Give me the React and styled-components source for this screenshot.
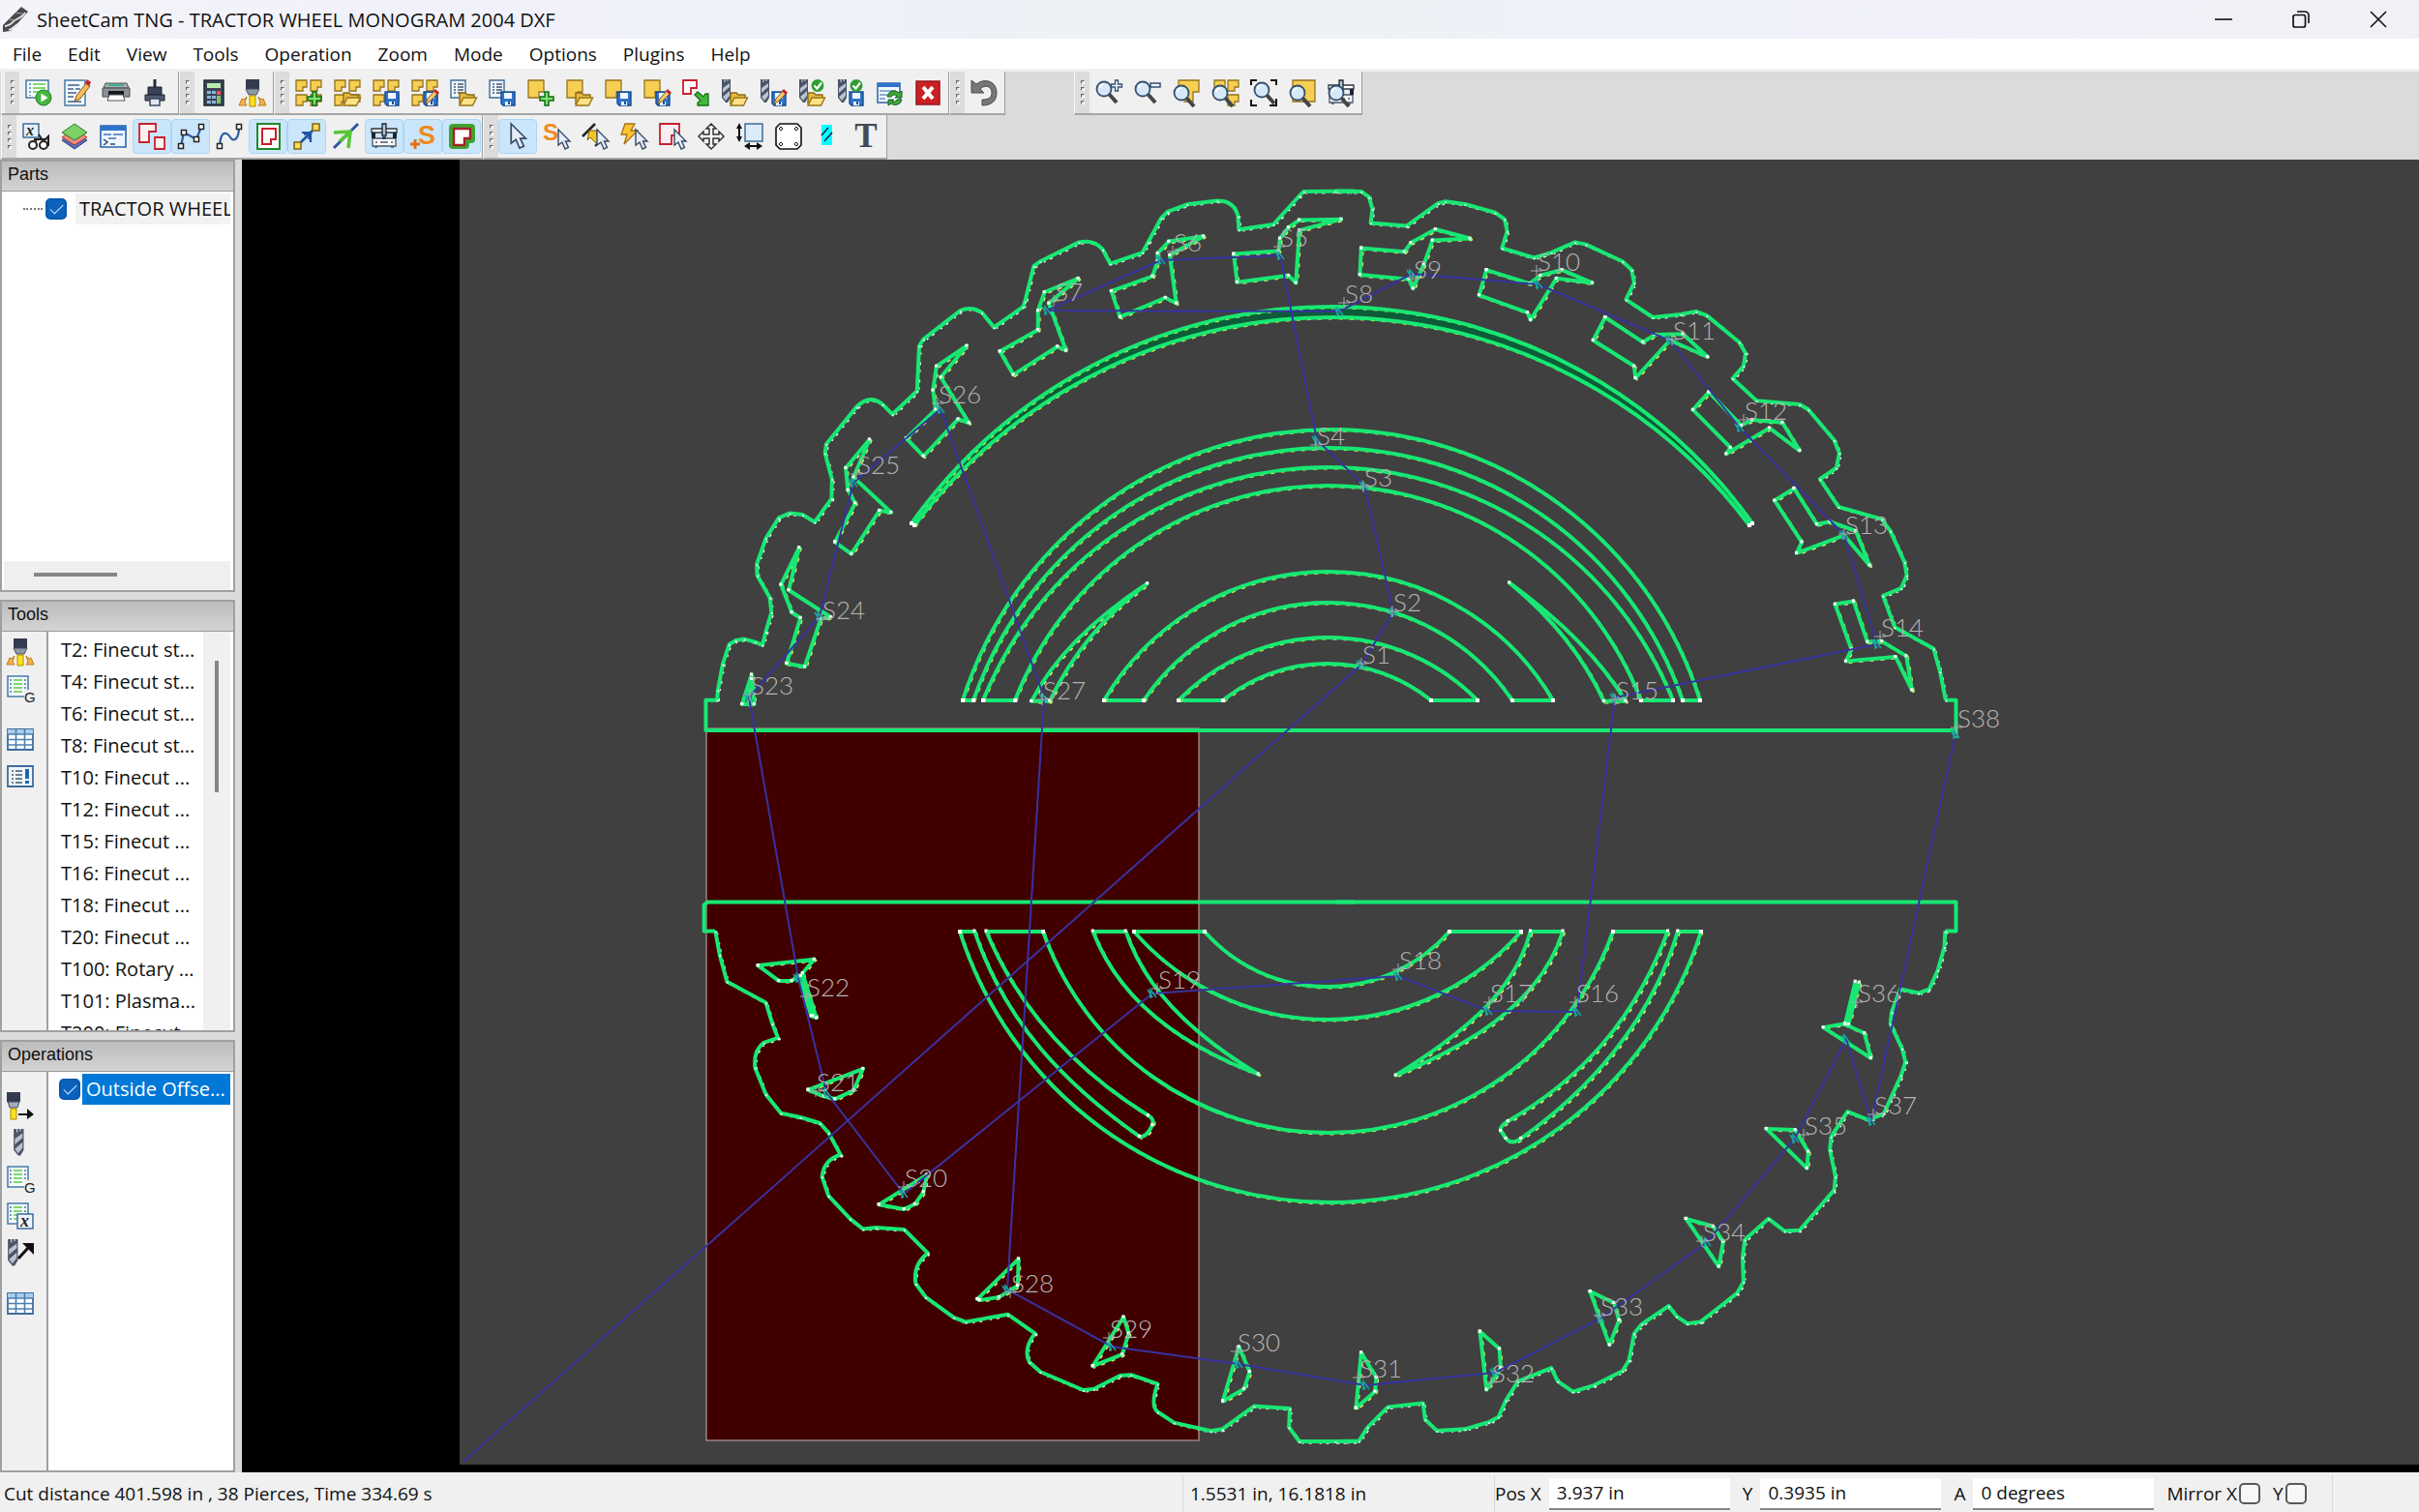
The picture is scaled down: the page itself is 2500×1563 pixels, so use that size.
import React from "react";
import styled, { createGlobalStyle } from "styled-components";

const GlobalStyle = createGlobalStyle`
  * {
    box-sizing: border-box;
  }

  body {
    margin: 0;
    background: #dbdbdb;
    color: #111;
    font-family: "Open Sans", "Noto Sans", sans-serif;
    font-size: 19px;
  }

  button, input {
    font: inherit;
    color: inherit;
  }
`;

// --- WINDOW ---
const Window = styled.div`
  display: flex;
  flex-direction: column;
  height: 100vh;
  overflow: hidden;
`;

const TitleBar = styled.header`
  display: flex;
  align-items: center;
  justify-content: space-between;
  height: 40px;
  padding: 0 24px 0 2px;
  background: linear-gradient(90deg, #f3f3f9, #f0f1fb 25%, #ecf2f5 50%, #f1f1fb 80%, #f1f0f5);
`;

const Title = styled.h1`
  display: flex;
  align-items: center;
  gap: 8px;
  margin: 0;
  font-size: 20px;
  font-weight: 400;
`;

const WindowButtons = styled.div`
  display: flex;
  gap: 44px;
`;

const WindowButton = styled.button`
  display: flex;
  align-items: center;
  justify-content: center;
  width: 36px;
  height: 32px;
  padding: 0;
  border: none;
  background: none;
`;

const MenuBar = styled.nav`
  display: flex;
  align-items: center;
  gap: 1px;
  height: 34px;
  padding-top: 1px;
  background: #fff;
  border-bottom: 3px solid #f0f0f0;
`;

const MenuItem = styled.button`
  padding: 0 13px;
  border: none;
  background: none;
  line-height: 30px;
`;

// --- TOOLBARS ---
const ToolbarArea = styled.div`
  padding-left: 1px;
  background: #dbdbdb;
`;

const ToolbarRow = styled.div`
  display: flex;
  height: ${(p) => p.$height}px;
`;

const ToolGroup = styled.div`
  display: flex;
  align-items: center;
  padding: 0 ${(p) => p.$pad || 1}px;
  margin-left: ${(p) => (p.$detached ? 71 : 0)}px;
  background: #f0f0f0;
  border-left: 1px solid #f7f7f7;
  border-right: 1px solid #9c9c9c;
  border-bottom: 2px solid #a6a6a6;
`;

const Grip = styled.span`
  display: flex;
  flex-direction: column;
  align-items: center;
  justify-content: center;
  gap: 3px;
  align-self: stretch;
  width: 15px;
  margin-left: -1px;
  background: #dcdcdc;

  i {
    width: 4px;
    height: 4px;
    border: 1px solid #fff;
    border-top-color: #666;
    border-left-color: #666;
  }
`;

const ToolButton = styled.button`
  display: flex;
  align-items: center;
  justify-content: center;
  width: 40px;
  height: 36px;
  padding: 0;
  border: 1px solid ${(p) => (p.$on ? "#a9d6f7" : "transparent")};
  border-radius: 4px;
  background: ${(p) => (p.$on ? "#cbe6fa" : "none")};
`;

const Svg = styled.svg`
  display: block;
  width: ${(p) => p.$w || 28}px;
  height: ${(p) => p.$h || 28}px;
  overflow: visible;
`;

// --- WORKSPACE ---
const Workspace = styled.main`
  display: flex;
  flex: 1;
  min-height: 0;
`;

const Sidebar = styled.aside`
  display: flex;
  flex-direction: column;
  gap: 8px;
  width: 250px;
  padding-right: 7px;
  background: #dbdbdb;
`;

const Panel = styled.section`
  display: flex;
  flex-direction: column;
  flex: 1;
  min-height: 0;
  border: 2px solid #a0a0a0;
`;

const PanelTitle = styled.h2`
  height: 31px;
  margin: 0;
  padding: 0 6px;
  border-bottom: 1px solid #999;
  background: linear-gradient(#bcbcbc, #d4d4d4);
  font: 18px/27px "Liberation Sans", sans-serif;
`;

const PanelBody = styled.div`
  display: flex;
  flex: 1;
  min-height: 0;
  background: #fff;
  font-size: 20px;
`;

const Strip = styled.div`
  display: flex;
  flex-direction: column;
  gap: 10px;
  width: 48px;
  padding: ${(p) => p.$top}px 5px 0;
  background: #f0f0f0;
  border-right: 2px solid #a0a0a0;
`;

const StripButton = styled.button`
  display: flex;
  padding: 0;
  border: none;
  background: none;
  margin-top: ${(p) => (p.$break ? 15 : 0)}px;
`;

const Tree = styled.div`
  display: flex;
  flex-direction: column;
  justify-content: space-between;
  flex: 1;
  min-width: 0;
  padding-right: 3px;
`;

const CheckRow = styled.label`
  display: flex;
  align-items: center;
  height: 32px;
  margin-top: 2px;
  padding-left: ${(p) => (p.$tree ? 22 : 11)}px;
`;

const Dots = styled.span`
  width: 20px;
  margin-right: 3px;
  border-top: 2px dotted #777;
`;

const CheckBox = styled.input`
  appearance: none;
  display: grid;
  place-content: center;
  flex: none;
  width: 22px;
  height: 22px;
  margin: 0;
  border: 2px solid ${(p) => (p.defaultChecked ? "#0a58ad" : "#5a5a5a")};
  border-radius: 5px;
  background: ${(p) => (p.defaultChecked ? "#0b62bd" : "#f7f7f7")};

  &:checked::after {
    content: "";
    width: 12px;
    height: 6px;
    margin-bottom: 4px;
    border-left: 1px solid #d9ecff;
    border-bottom: 1px solid #d9ecff;
    transform: rotate(-45deg);
  }
`;

const RowText = styled.span`
  flex: 1;
  min-width: 0;
  margin-left: ${(p) => (p.$selected ? 2 : 9)}px;
  padding-left: 4px;
  overflow: hidden;
  white-space: nowrap;
  line-height: 32px;
  color: ${(p) => (p.$selected ? "#fff" : "#111")};
  background: ${(p) => (p.$selected ? "#0078d7" : "#f2f2f2")};
`;

const ScrollX = styled.div`
  height: 30px;
  margin-left: 2px;
  padding: 12px 0 0 31px;
  background: #efefef;

  &::before {
    content: "";
    display: block;
    width: 86px;
    height: 4px;
    background: #868686;
  }
`;

const ScrollY = styled.div`
  width: 28px;
  margin-right: 3px;
  padding: 30px 0 0 12px;
  background: #f0f0f0;

  &::before {
    content: "";
    display: block;
    width: 4px;
    height: 136px;
    background: #868686;
  }
`;

const ToolList = styled.ul`
  flex: 1;
  min-width: 0;
  margin: 0;
  padding: 2px 0 0 13px;
  list-style: none;
  overflow: hidden;
  white-space: nowrap;
  line-height: 33px;
`;

const Canvas = styled.div`
  flex: 1;
  min-width: 0;
  background: #000;

  svg {
    display: block;
    width: 100%;
    height: 100%;
  }

  text {
    font: 300 26px Lato, "Open Sans", sans-serif;
    fill: #b4b4b4;
  }
`;

// --- STATUS BAR ---
const StatusBar = styled.footer`
  display: grid;
  grid-template-columns: 1223fr 322fr 866fr 89fr;
  height: 41px;
  padding-top: 3px;
  background: #f0f0f0;
`;

const StatusCell = styled.div`
  display: flex;
  align-items: center;
  padding-left: ${(p) => p.$pad || 0}px;
  border-right: 1px solid #d8d8d8;
  white-space: nowrap;
`;

const Field = styled.label`
  display: flex;
  align-items: center;
  gap: ${(p) => p.$gap || 8}px;
  margin-right: 13px;

  input[type="text"] {
    width: 187px;
    height: 33px;
    padding: 0 8px;
    border: none;
    border-bottom: 2px solid #868686;
    background: #fff;
  }
`;

// --- ICON PIECES, all in a 28 x 28 box ---
const gold = { fill: "#f6cf52", stroke: "#94731f", strokeWidth: 1.3 };

const L = ({ x = 0, y = 0 }) => (
  <path transform={`translate(${x} ${y})`} d="M1 1h11v7H8v4H1z" {...gold} />
);
const Grid4 = () => (
  <>
    <L /><L x={15} /><L y={15} /><L x={15} y={15} />
  </>
);
const BigPart = () => <path d="M1 1h16v12h-5v6H1z" {...gold} />;
const Plus = () => (
  <path d="M18 13h4v5h5v4h-5v5h-4v-5h-5v-4h5z" fill="#7ee06a" stroke="#0d6b14" strokeWidth="1.5" />
);
const Folder = () => (
  <>
    <path d="M10 26V14h6l2 2h7v3" fill="#e6b93f" stroke="#8a6a14" strokeWidth="1.4" />
    <path d="M10 27l4-8h13.500l-4 8z" fill="#fbe285" stroke="#9a7417" strokeWidth="1.4" />
  </>
);
const Disk = () => (
  <>
    <path d="M13 13h14v14H15l-2-2z" fill="#2f73c9" stroke="#174a93" strokeWidth="1.4" />
    <path d="M16 14h8v6h-8zM17 23h6v4h-6z" fill="#eef6ff" />
    <path d="M20 23h2v3h-2z" fill="#174a93" />
  </>
);
const Pencil = () => (
  <>
    <path d="M15 25l2-5 7-8 3 3-8 8z" fill="#f5c76b" stroke="#8a5a1c" strokeWidth="1" />
    <path d="M23 12l2-2 4 4-2 2z" fill="#c4202a" />
  </>
);
const Doc = () => (
  <>
    <path d="M1 1h15v18H1z" fill="#eef6fd" stroke="#3d6c99" strokeWidth="1.400" />
    <path d="M4 5h2m2 0h6M4 8h2m2 0h6M4 11h2m2 0h6M4 14h2m2 0h6" stroke="#44566b" strokeWidth="1.300" />
  </>
);
const Drill = ({ x = 0 }) => (
  <g transform={`translate(${x} 0)`}>
    <path d="M1 0h9v19l-3 5H5l-4-5z" fill="#4a5464" />
    <path d="M2 9l7-5v4l-7 6zM2 18l7-6v5l-4 5z" fill="#b9c2cf" />
    <path d="M4 0v3M7 0v2" stroke="#d3d9e2" />
  </g>
);
const Tick = () => (
  <>
    <circle cx="20" cy="6.500" r="6.500" fill="#2f9e33" />
    <path d="M16.500 6.500l3 3 4.500-6" fill="none" stroke="#fff" strokeWidth="2.200" />
  </>
);
const Lens = ({ y = 0 }) => (
  <g transform={`translate(0 ${y})`}>
    <path d="M14 15l8 9" stroke="#444" strokeWidth="4" />
    <circle cx="9" cy="10" r="7.500" fill="#d6e9fa" stroke="#36506e" strokeWidth="1.800" />
    <path d="M5 9a4 4 0 0 1 4-4" fill="none" stroke="#fff" strokeWidth="1.600" />
  </g>
);
const Pointer = ({ x = 0, y = 0 }) => (
  <path
    transform={`translate(${x} ${y})`}
    d="M1 0v16l4-3 3 7 3.500-1.500-3-6.500H13z"
    fill="#e6eff9"
    stroke="#3b4c66"
    strokeWidth="1.400"
  />
);
const Torch = () => (
  <>
    <path d="M7 0h14v10H7z" fill="#343b4e" />
    <path d="M7 10h14l-3 6h-8z" fill="#8e99a8" stroke="#454d5c" />
    <path d="M11 17h6v11h-6z" fill="#ffe11a" stroke="#b08d00" />
    <path d="M8 18l-3 3-2-1-3 7h8l-2-3zM20 18l3 3 2-1 3 7h-8l2-3z" fill="#f1b34c" stroke="#c07a1c" />
  </>
);
const Listing = () => (
  <>
    <path d="M1 1h21v21H1z" fill="#f5fbff" stroke="#4379a8" strokeWidth="1.500" />
    <path d="M7 5h9M7 9h9M7 13h9M7 17h9" stroke="#7fd86f" strokeWidth="2.200" />
    <path d="M4 4v16M19 4v11" stroke="#4379a8" strokeWidth="1.500" strokeDasharray="2 2" />
  </>
);
const Machine = () => (
  <>
    <path d="M1 6h26v4H1z" fill="#fff" stroke="#2a3442" strokeWidth="1.300" />
    <path d="M2 16h24v8H2z" fill="#fff" stroke="#4a5564" strokeWidth="1.300" />
    <path d="M1 10h4v6H1zM23 10h4v6h-4z" fill="#1c2430" />
    <path d="M12 1h4v12h-1v3h-2v-3h-1z" fill="#b7c2d0" stroke="#1c2430" strokeWidth="1.300" />
    <path d="M5 20h2m3 0h8m3 0h2M4 25h3m14 0h3" stroke="#4a5564" strokeWidth="1.500" />
  </>
);
const Nodes = ({ pts }) =>
  pts.map(([x, y]) => (
    <rect key={`${x}-${y}`} x={x - 2.5} y={y - 2.5} width="5" height="5" fill="#fff" stroke="#222" strokeWidth="1.500" />
  ));

const ICONS = {
  run: (
    <>
      <path d="M1 1h23v18H1z" fill="#f5fbff" stroke="#4379a8" strokeWidth="1.500" />
      <path d="M8 5h13M8 9h13M8 13h9" stroke="#7fd86f" strokeWidth="2" />
      <path d="M5 4v13" stroke="#4379a8" strokeDasharray="2 2" strokeWidth="1.500" />
      <circle cx="19" cy="19" r="8" fill="#46b63f" stroke="#207b23" />
      <path d="M16.500 14.500l7 4.500-7 4.500z" fill="#fff" />
    </>
  ),
  edit: (
    <>
      <path d="M1 1h21v26H1z" fill="#f2f9ff" stroke="#4379a8" strokeWidth="1.500" />
      <path d="M4 6h12M4 10h6m2 0h5M4 14h9M4 18h6M4 23h14" stroke="#3f5f86" strokeWidth="1.600" />
      <path d="M11 23l2-6L23 4l4 3-10 13z" fill="#f5bd58" stroke="#8a5a1c" />
      <path d="M22 4l2-4 4 3-2 4z" fill="#c4202a" />
    </>
  ),
  printer: (
    <>
      <path d="M3 4h22l2 5H1z" fill="#a9adb3" stroke="#4d5157" />
      <path d="M6 5h16v2H6z" fill="#3fb08a" />
      <path d="M0 9h28v9H0z" fill="#8b9097" stroke="#4b4f55" />
      <path d="M6 12h16v8H6z" fill="#16181b" />
      <path d="M7 16h14l2 6H5z" fill="#fff" stroke="#555" />
    </>
  ),
  plotter: (
    <>
      <path d="M14 0v9" stroke="#272d3b" strokeWidth="3" />
      <path d="M7 8h14v8H7z" fill="#3a4257" stroke="#1d2230" />
      <path d="M4 16h20v6H4z" fill="#4f5a6d" stroke="#1d2230" />
      <path d="M9 20h10v7H9z" fill="#dfe8f1" stroke="#3d465a" strokeWidth="1.500" />
    </>
  ),
  calculator: (
    <>
      <path d="M4 1h20v26H4z" fill="#3b4456" stroke="#222936" strokeWidth="1.500" />
      <path d="M7 4h14v5H7z" fill="#b8ecb0" />
      <path d="M7 12h4v3H7zM12 12h4v3h-4zM7 17h4v3H7zM12 17h4v3h-4zM7 22h4v3H7zM12 22h4v3h-4z" fill="#8fb4d8" />
      <path d="M17 12h4v4h-4z" fill="#e55" />
      <path d="M17 17h4v8h-4z" fill="#7ec26f" />
    </>
  ),
  torch: <Torch />,
  gridAdd: <><Grid4 /><Plus /></>,
  gridOpen: <><Grid4 /><Folder /></>,
  gridSave: <><Grid4 /><Disk /></>,
  gridEdit: <><Grid4 /><Disk /><Pencil /></>,
  docOpen: <><Doc /><Folder /></>,
  docSave: <><Doc /><Disk /></>,
  partAdd: <><BigPart /><Plus /></>,
  partOpen: <><BigPart /><Folder /></>,
  partSave: <><BigPart /><Disk /></>,
  partEdit: <><BigPart /><Disk /><Pencil /></>,
  partMove: (
    <>
      <path d="M1 1h14v8H9v6H1z" fill="#fff" stroke="#c8202d" strokeWidth="1.800" />
      <path d="M13 16l3-3 6 5 2-3h3v12H16v-3l3-2z" fill="#41b83a" stroke="#14701a" strokeWidth="1.300" />
    </>
  ),
  drillOpen: <><Drill /><Folder /></>,
  drillEdit: <><Drill /><Disk /><Pencil /></>,
  drillTickOpen: <><Drill /><Folder /><Tick /></>,
  drillTickSave: <><Drill /><Disk /><Tick /></>,
  refresh: (
    <>
      <path d="M2 4h23v20H2z" fill="#f2f8ff" stroke="#2d62a8" strokeWidth="1.500" />
      <path d="M2 4h23v4H2z" fill="#2f73c9" />
      <path d="M4 12h17M4 16h8M4 20h6" stroke="#6b93c4" strokeWidth="1.600" />
      <path d="M12 18a7 7 0 0 1 12-4l3-2v7h-7l2-2a4 4 0 0 0-6 1zM27 21a7 7 0 0 1-11 4l-3 2v-6h6l-2 2a4 4 0 0 0 5-2z" fill="#3fa83a" stroke="#14601a" />
    </>
  ),
  cancel: (
    <>
      <path d="M2 2h24v24H2z" fill="#cc1f24" stroke="#96141a" strokeWidth="1.500" />
      <path d="M9 8l10 12M19 8L9 20" stroke="#fff" strokeWidth="4" />
    </>
  ),
  undo: (
    <path
      d="M1 1v13h13l-4-4c5-5 12-3 12 4 0 5-4 7-10 7v6c10 0 15-5 15-13C27 2 15-2 6 5z"
      fill="#777"
      stroke="#4f4f4f"
    />
  ),
  zoomIn: <><Lens /><path d="M20.500 1h3v4h4v3h-4v4h-3V8h-4V5h4z" fill="#e9f3fc" stroke="#36506e" strokeWidth="1.300" /></>,
  zoomOut: <><Lens /><path d="M17 4h10v4H17z" fill="#e9f3fc" stroke="#36506e" strokeWidth="1.500" /></>,
  zoomPart: <><path d="M6 1h21v12h-6v10h-9V10H6z" {...gold} /><Lens y={4} /></>,
  zoomNest: <><L x={2} /><L x={16} /><L x={16} y={15} /><Lens y={4} /></>,
  zoomFit: (
    <>
      <path d="M1 6V1h6M21 1h6v5M1 21v6h6M27 20v7h-7" fill="none" stroke="#111" strokeWidth="2" />
      <g transform="translate(3 1)"><Lens /></g>
    </>
  ),
  zoomSheet: <><path d="M4 1h23v22H4z" {...gold} /><Lens y={4} /></>,
  zoomMachine: <><Machine /><Lens y={4} /></>,

  variables: (
    <>
      <path d="M1 1h16v14H1z" fill="#e6f1fb" stroke="#3d6c99" strokeWidth="1.500" />
      <text x="4" y="13" fontSize="16" fontStyle="italic" fontWeight="700" fontFamily="Liberation Serif" fill="#222">x</text>
      <path d="M17 12l4 6M12 17h12l3-3v10M15 17l-3 5" fill="none" stroke="#222" strokeWidth="2" />
      <circle cx="11" cy="23" r="4" fill="#fff" stroke="#222" strokeWidth="2" />
      <circle cx="22" cy="23" r="4" fill="#fff" stroke="#222" strokeWidth="2" />
    </>
  ),
  layers: (
    <>
      <path d="M14 10l13 8-13 9L1 18z" fill="#4c6fc0" stroke="#2b4585" />
      <path d="M14 6l13 9-13 8L1 15z" fill="#e98a80" stroke="#a33" />
      <path d="M14 1l13 9-13 8L1 10z" fill="#7ed068" stroke="#2c7a22" />
    </>
  ),
  code: (
    <>
      <path d="M1 3h26v22H1z" fill="#eef6ff" stroke="#2766b5" strokeWidth="1.600" />
      <path d="M1 3h26v5H1z" fill="#2f73c9" />
      <path d="M4 12h8m2 0h10M9 16h8" stroke="#3a74bd" strokeWidth="1.600" />
      <path d="M4 17l4 3-4 3M11 22h5" fill="none" stroke="#33465e" strokeWidth="1.500" />
    </>
  ),
  shapes: (
    <>
      <path d="M1 1h17v8h-7v11H1z" fill="#fdeff0" stroke="#c8202d" strokeWidth="1.800" />
      <path d="M17 15h10v12H17z" fill="#fdeff0" stroke="#c8202d" strokeWidth="1.800" />
    </>
  ),
  segments: (
    <>
      <path d="M4 24L7 10l13 7L25 4" fill="none" stroke="#2b5aa0" strokeWidth="2.200" />
      <Nodes pts={[[4, 24], [7, 10], [20, 17], [25, 4]]} />
    </>
  ),
  curve: (
    <>
      <path d="M4 24C5 6 12 10 15 15s9 3 9-11" fill="none" stroke="#2b5aa0" strokeWidth="2.200" />
      <Nodes pts={[[4, 24], [24, 4]]} />
    </>
  ),
  offset: (
    <>
      <path d="M3 1h23v26H3z" fill="#fff" stroke="#1d8a2a" strokeWidth="2" />
      <path d="M8 6h14v11h-5v5H8z" fill="#fff" stroke="#c8202d" strokeWidth="2" />
    </>
  ),
  direction: (
    <>
      <path d="M4 24L20 8" stroke="#2053a3" strokeWidth="2.600" />
      <path d="M9 10h9v10M11 12l7-2-2 7" fill="none" stroke="#2053a3" strokeWidth="2.200" />
      <path d="M1 20h7v7H1zM20 1h7v7h-7z" fill="#ffd95a" stroke="#7b6514" strokeWidth="1.500" />
    </>
  ),
  travel: (
    <>
      <path d="M2 26L27 1" stroke="#2b5aa0" strokeWidth="3" />
      <path d="M2 10l17-1-2 17M8 19L18 10" fill="none" stroke="#58c534" strokeWidth="3.500" />
    </>
  ),
  machine: <Machine />,
  starts: (
    <>
      <text x="9" y="22" fontSize="27" fontWeight="700" fontFamily="Liberation Sans" fill="#f08a1d">S</text>
      <path d="M6 17v10M1 22h10" stroke="#e0701a" strokeWidth="3" />
    </>
  ),
  kerf: (
    <>
      <path d="M5 5h19v12h-6v6H5z" fill="#fff" stroke="#3da52f" strokeWidth="8" strokeLinejoin="round" />
      <path d="M6 6h17v10h-6v7H6z" fill="#fff" stroke="#a5222b" strokeWidth="2.400" />
    </>
  ),
  select: <g transform="translate(6 1) scale(1.250)"><Pointer /></g>,
  selectStart: (
    <>
      <text x="0" y="18" fontSize="24" fontWeight="700" fontFamily="Liberation Sans" fill="#f08a1d">S</text>
      <Pointer x={15} y={7} />
    </>
  ),
  selectLink: (
    <>
      <path d="M1 14L14 1" stroke="#222" strokeWidth="2.500" />
      <path d="M8 8h10l-3 3 6 6-5 5-7-7-3 3z" fill="#f5c522" stroke="#80610c" />
      <path d="M14 24l7-7" stroke="#222" strokeWidth="2" />
      <Pointer x={15} y={7} />
    </>
  ),
  selectRapid: (
    <>
      <path d="M5 1h10l-4 7h7L4 22l3-10H1z" fill="#fbc62f" stroke="#a5701a" strokeWidth="1.300" />
      <Pointer x={15} y={7} />
    </>
  ),
  selectPart: (
    <>
      <path d="M1 1h20v12h-8v9H1z" fill="#f8eef0" stroke="#c8202d" strokeWidth="1.800" />
      <Pointer x={15} y={7} />
    </>
  ),
  pan: (
    <path
      d="M14 1l5 5h-3v6h6V9l5 5-5 5v-3h-6v6h3l-5 5-5-5h3v-6H6v3l-5-5 5-5v3h6V6H9z"
      fill="#fff"
      stroke="#333"
      strokeWidth="1.500"
    />
  ),
  size: (
    <>
      <path d="M9 1h18v18H9z" fill="#dcebf9" stroke="#3d6c99" strokeWidth="1.500" />
      <path d="M3 4v12M12 24h11" stroke="#111" strokeWidth="2" />
      <path d="M0 6l3-6 3 6zM0 14l3 6 3-6zM14 20l-6 4 6 4zM21 20l6 4-6 4z" fill="#111" />
    </>
  ),
  plate: (
    <>
      <path d="M5 1h18l4 4v18l-4 4H5l-4-4V5z" fill="#fff" stroke="#111" strokeWidth="1.600" />
      <path d="M6 4l2 2-2 2-2-2zM22 4l2 2-2 2-2-2zM6 20l2 2-2 2-2-2zM22 20l2 2-2 2-2-2z" fill="none" stroke="#111" />
    </>
  ),
  strip: (
    <>
      <path d="M8 2h11v21H8z" fill="#0ff" />
      <path d="M8 13l7-8M11 19l8-9" stroke="#114" strokeWidth="1.300" />
    </>
  ),
  text: (
    <text x="14" y="25" textAnchor="middle" fontSize="35" fontFamily="Liberation Serif" fontWeight="700" fill="#454a52">T</text>
  ),

  gcode: (
    <>
      <Listing />
      <path d="M18 15h10v13H18z" fill="#f0f0f0" />
      <text x="18" y="28" fontSize="15" fontFamily="Liberation Sans" fill="#222">G</text>
    </>
  ),
  table: (
    <>
      <path d="M1 3h26v21H1z" fill="#fff" stroke="#3d6c99" strokeWidth="1.800" />
      <path d="M1 3h26v5H1z" fill="#a9cdee" />
      <path d="M1 8h26M1 13.500h26M1 19h26M9.500 3v21M18.500 3v21" stroke="#4b80b0" strokeWidth="1.600" />
    </>
  ),
  notes: (
    <>
      <path d="M1 3h26v21H1z" fill="#eef6fd" stroke="#3d6c99" strokeWidth="1.800" />
      <path d="M5 8h2m2 0h7M5 12h2m2 0h7M5 16h2m2 0h7M5 20h2m2 0h7" stroke="#44566b" strokeWidth="1.600" />
      <path d="M19 6h4v10h-4zM19 18h4v3h-4z" fill="#1f66b0" />
    </>
  ),
  jet: (
    <>
      <path d="M0 0h14v10H0z" fill="#343b4e" />
      <path d="M1 10h12l-2 6H3z" fill="#a3adba" stroke="#454d5c" />
      <path d="M4 17h6v11H4z" fill="#ffe11a" stroke="#b08d00" />
      <path d="M12 22h9v-5l7 6-7 5v-4h-9z" fill="#111" />
    </>
  ),
  drill: <g transform="translate(6 0) scale(1.150)"><Drill /></g>,
  gvar: (
    <>
      <Listing />
      <path d="M11 12h16v15H11z" fill="#eef6fd" stroke="#3d6c99" strokeWidth="1.500" />
      <text x="14" y="25" fontSize="18" fontStyle="italic" fontWeight="700" fontFamily="Liberation Serif" fill="#222">x</text>
    </>
  ),
  drillMove: (
    <>
      <g transform="scale(1.150)"><Drill /></g>
      <path d="M12 20L22 9" stroke="#111" strokeWidth="3" />
      <path d="M16 4h12v12z" fill="#111" />
    </>
  ),
};

const MENUS = ["File", "Edit", "View", "Tools", "Operation", "Zoom", "Mode", "Options", "Plugins", "Help"];

const TOP_GROUPS = [
  { pad: 4, items: ["run", "edit", "printer", "plotter"] },
  { items: ["calculator", "torch"] },
  {
    items: [
      "gridAdd", "gridOpen", "gridSave", "gridEdit", "docOpen", "docSave", "partAdd", "partOpen", "partSave",
      "partEdit", "partMove", "drillOpen", "drillEdit", "drillTickOpen", "drillTickSave", "refresh", "cancel",
    ],
  },
  { items: ["undo"] },
  { detached: true, items: ["zoomIn", "zoomOut", "zoomPart", "zoomNest", "zoomFit", "zoomSheet", "zoomMachine"] },
];

const BOTTOM_GROUPS = [
  {
    items: [
      "variables", "layers", "code", "shapes", "segments", "curve", "offset", "direction", "travel", "machine",
      "starts", "kerf",
    ],
  },
  { items: ["select", "selectStart", "selectLink", "selectRapid", "selectPart", "pan", "size", "plate", "strip", "text"] },
];

const ACTIVE = ["shapes", "segments", "offset", "direction", "machine", "starts", "kerf", "select"];

const TOOLS = [
  "T2: Finecut st...", "T4: Finecut st...", "T6: Finecut st...", "T8: Finecut st...", "T10: Finecut ...",
  "T12: Finecut ...", "T15: Finecut ...", "T16: Finecut ...", "T18: Finecut ...", "T20: Finecut ...",
  "T100: Rotary ...", "T101: Plasma...", "T200: Finecut ...",
];

// --- DRAWING DATA ---
// arch through (x1, y) and (x2, y) with its apex at height top
function arch(x1, x2, y, top) {
  const h = (x2 - x1) / 2;
  const s = Math.abs(y - top);
  const r = (h * h + s * s) / (2 * s);
  return `M${x1} ${y}A${r} ${r} 0 0 ${top < y ? 1 : 0} ${x2} ${y}`;
}

const ARCS = [
  arch(942, 1811, 541, 317),
  arch(945, 1808, 543, 328),
  arch(995, 1757, 724, 444),
  arch(1006, 1739, 724, 463),
  arch(1016, 1729, 724, 483),
  arch(1049, 1696, 724, 502),
  arch(1141, 1605, 724, 591),
  arch(1182, 1563, 724, 623),
  arch(1218, 1527, 724, 659),
  arch(1264, 1479, 724, 686),
  arch(992, 1758, 963, 1243),
  arch(1078, 1667, 963, 1171),
  arch(1172, 1572, 963, 1054),
  arch(1245, 1498, 963, 1020),
];

// flat ends that close the bands
const ENDS =
  "M995 724h11M1016 724h33M1141 724h41M1218 724h46M1739 724h18M1696 724h33M1563 724h42M1479 724h48M992 963h15M1019 963h59M1129 963h34M1172 963h73M1498 963h74M1582 963h33M1667 963h57M1734 963h24";

// each tile has its own drawing units
const TILES = [
  {
    at: "translate(700 170) scale(0.44643 0.38265)",
    bars: "M1568 1529H66V1447H92",
    outline:
      "M92 1447L94 1420 105 1350 120 1297 135 1286 155 1282 180 1290 197 1298 205 1262 218 1210 214 1170 185 1110 184 1080 205 1010 235 955 260 942 290 946 318 966 357 903 358 850 342 780 345 755 415 655Q445 620 475 648L498 675 555 612 560 490 570 472 655 395Q680 382 705 400L733 440 800 385 805 370 825 275 840 262 930 210Q965 202 985 230L1002 268 1077 238 1090 210 1120 145 1135 128 1180 108 1250 98Q1290 98 1298 140L1300 176 1380 162 1440 85 1450 73 1568 72",
    parts: [
      "M1288 242L1392 234 1395 200 1415 170 1440 150 1537 148 1440 178 1432 320 1415 300 1296 318Z",
      "M1005 342L1100 302 1112 262 1112 240 1138 208 1218 194 1140 245 1155 375 1130 360 1025 412Z",
      "M747 505L835 447 835 395 850 345 928 308 860 375 900 503 880 492 778 568Z",
      "M530 740L598 662 592 610 600 545 670 490 610 575 675 698 650 688 570 788Z",
      "M365 1020L412 915 395 880 390 820 445 743 408 845 495 940 468 935 403 1052Z",
      "M253 1348L285 1225 265 1210 240 1135 282 1035 258 1150 355 1223 332 1228 295 1357Z",
      "M150 1458L172 1378 178 1458ZM165 1450L172 1390",
      "M820 1450Q895 1280 1088 1132Q940 1260 862 1450Z",
    ],
  },
  {
    at: "translate(1380 170) scale(0.44643 0.38265)",
    bars: "M1413 1447H1437V1550M1437 1529H0",
    outline:
      "M0 72L60 73 78 88 86 120 82 158 165 166 238 105 255 100 300 107 370 130 392 148 398 180 386 226 460 252 500 238 555 210 580 216 665 262 686 285 692 320 673 365 735 413 800 405 835 397 860 408 935 480 950 510 945 545 920 578 975 638 1075 648 1095 662 1155 745 1167 780 1160 820 1122 850 1165 925 1265 958 1285 990 1318 1075 1323 1110 1310 1145 1268 1165 1295 1250 1385 1308 1400 1370 1413 1447",
    parts: [
      "M60 226L160 236 175 212 232 175 312 200 225 205 205 270 180 335 170 310 57 298Z",
      "M350 285L450 322 475 300 525 285 595 320 512 308 452 420 445 400 333 353Z",
      "M625 413L712 480 740 460 805 458 862 520 775 475 695 577 692 545 597 475Z",
      "M865 615L940 705 965 690 1035 697 1075 773 1005 712 905 782 915 765 828 663Z",
      "M1062 875L1115 972 1145 965 1205 990 1237 1083 1178 1002 1068 1050 1080 1020 1017 908Z",
      "M1200 1180L1232 1290 1265 1288 1322 1328 1335 1420 1297 1330 1182 1342 1195 1310 1157 1188Z",
      "M672 1450Q590 1290 403 1130Q550 1270 622 1450Z",
    ],
  },
  {
    at: "translate(700 900) scale(0.44643 0.39541)",
    bars: "M1568 82H70L62 90V158H88",
    outline:
      "M88 158L98 220 115 290 205 345 220 400 233 437 200 450Q176 470 180 515L205 585 240 634 285 645 330 660 350 685 378 743Q340 755 335 800L350 850 400 910 430 937 460 933 525 938 580 1000Q545 1030 552 1080L575 1115 640 1168 668 1180 765 1160 828 1210Q800 1250 815 1285L840 1310 940 1358 965 1355 1025 1320 1050 1318 1112 1342Q1094 1400 1112 1415L1150 1443 1235 1465 1262 1460 1335 1400 1418 1406 1416 1455 1440 1492 1568 1492",
    parts: [
      "M187 248L317 232 290 268 322 385 310 380 280 275 265 288 235 288ZM286 275L314 380",
      "M303 573L430 518 408 575 365 597 340 590Z",
      "M467 873L578 795 570 840 550 872 525 885Z",
      "M695 1120L790 1015 788 1085 745 1115 700 1123Z",
      "M962 1295L1033 1167 1045 1210 1030 1265Z",
      "M1263 1387L1300 1245 1325 1310 1312 1355Z",
      "M688 158C760 400 900 560 1070 695Q1085 700 1100 665Q1105 650 1090 640C920 520 790 360 715 158",
      "M962 158C1020 330 1150 450 1345 532C1180 420 1080 300 1038 158",
    ],
  },
  {
    at: "translate(1380 900) scale(0.44643 0.39541)",
    bars: "M1412 158H1437V82H0",
    outline:
      "M0 1492L55 1491 75 1455 122 1402 203 1392 208 1435 235 1464 300 1460 355 1442 378 1428 395 1385 423 1335 500 1300 515 1335 550 1362 600 1345 665 1308 680 1280 692 1210 710 1185 772 1138 790 1165 815 1184 845 1180 930 1105 945 1075 943 1010 948 965 1003 910 1040 942 1075 940 1155 835 1158 800 1145 730 1148 695 1186 630 1235 652 1270 635 1310 535 1320 500 1312 465 1285 400 1288 370 1308 310 1350 320 1375 310 1395 260 1410 200 1412 158",
    parts: [
      "M48 1405L60 1260 95 1325 92 1362Z",
      "M335 1205L380 1250 383 1300 350 1357Z",
      "M590 1100L645 1130 657 1175 635 1240Z",
      "M812 910L875 930 898 970 888 1035Z",
      "M998 675L1065 678 1095 735 1092 778Z",
      "M1204 290L1180 402 1225 425 1240 490 1130 410 1180 400M1213 292L1188 402",
      "M793 158C730 400 580 580 430 700Q408 718 395 700L383 680Q380 668 400 655C560 550 690 400 770 158",
      "M527 158C480 330 330 450 140 535C320 410 420 300 452 158",
    ],
  },
];

// pierce point x, y and label x, baseline y, in cutting order
const STARTS = [
  [1407, 687, 1409, 686], [1440, 633, 1441, 632], [1410, 502, 1411, 503], [1361, 455, 1362, 460],
  [1323, 264, 1324, 255], [1200, 269, 1214, 260], [1082, 321, 1091, 311], [1384, 322, 1391, 313],
  [1459, 283, 1462, 288], [1590, 294, 1590, 280], [1726, 352, 1730, 351], [1798, 442, 1804, 434],
  [1906, 553, 1908, 552], [1940, 666, 1945, 658], [1669, 721, 1671, 723], [1630, 1046, 1630, 1036],
  [1538, 1045, 1541, 1036], [1445, 1009, 1447, 1002], [1191, 1027, 1198, 1022], [934, 1234, 936, 1227],
  [854, 1129, 845, 1128], [825, 1011, 835, 1030], [774, 721, 777, 718], [847, 637, 851, 640],
  [882, 499, 887, 490], [972, 423, 971, 417], [1079, 721, 1079, 723], [1041, 1333, 1046, 1336],
  [1149, 1392, 1148, 1383], [1280, 1410, 1280, 1397], [1411, 1432, 1406, 1424], [1545, 1419, 1543, 1429],
  [1654, 1363, 1655, 1360], [1764, 1284, 1761, 1283], [1855, 1177, 1866, 1173], [1908, 1074, 1921, 1036],
  [1934, 1159, 1938, 1152], [2021, 759, 2024, 752],
];

// green cut line with bright flecks showing along one side of it
function Cut({ d, fleck, dash = "4 7", shift = 1, marker }) {
  return (
    <g fill="none" strokeLinejoin="round">
      {fleck && (
        <path
          d={d}
          transform={`translate(${shift} ${shift})`}
          stroke={fleck}
          strokeWidth="3"
          strokeDasharray={dash}
          vectorEffect="non-scaling-stroke"
        />
      )}
      <path
        d={d}
        stroke="#17e873"
        strokeWidth="4"
        vectorEffect="non-scaling-stroke"
        markerStart={marker}
        markerMid={marker}
        markerEnd={marker}
      />
    </g>
  );
}

function Drawing() {
  return (
    <svg viewBox="250 165 2250 1357" preserveAspectRatio="xMinYMin meet" role="img" aria-label="Tractor wheel tool paths">
      <defs>
        <marker id="node" markerUnits="userSpaceOnUse" markerWidth="8" markerHeight="9" refX="4" refY="5" overflow="visible">
          <rect width="7" height="8" fill="#eefcf2" />
        </marker>
        <marker id="vertex" markerUnits="userSpaceOnUse" markerWidth="5" markerHeight="5" refX="1" refY="0" overflow="visible">
          <rect width="4" height="5" fill="#eefcf2" />
        </marker>
        <marker id="end" markerUnits="userSpaceOnUse" markerWidth="4" markerHeight="4" refX="2" refY="2">
          <rect width="4" height="4" fill="#fff" />
        </marker>
      </defs>
      <rect x="475" y="165" width="2025" height="1349" fill="#404040" />
      <rect x="730" y="753" width="509" height="736" fill="#400000" stroke="#9a8080" strokeWidth="1.500" />
      <path d={arch(944, 1809, 542, 322)} fill="none" stroke="#0c5c38" strokeWidth="7" />
      <Cut d={ENDS} />
      {ARCS.map((d) => <Cut key={d} d={d} fleck="#e6ef3c" marker="url(#end)" />)}
      {TILES.map((tile) => (
        <g key={tile.at} transform={tile.at}>
          <Cut d={tile.bars} />
          <Cut d={tile.outline} fleck="#f4f6f2" dash="3 8 2 5" shift={3} marker="url(#vertex)" />
          {tile.parts.map((d) => <Cut key={d} d={d} fleck="#e9ef6a" shift={3} marker="url(#node)" />)}
        </g>
      ))}
      <polyline
        points={`479,1511 ${STARTS.map(([x, y]) => `${x},${y}`).join(" ")}`}
        fill="none"
        stroke="#37329f"
        strokeWidth="2"
      />
      {STARTS.map(([x, y, lx, ly], i) => (
        <g key={i}>
          <path d={`M${x - 5} ${y - 4}l5 8M${x - 2} ${y + 5}v-9l6 8`} fill="none" stroke="#1aa6a0" strokeWidth="1.500" />
          <path d={`M${lx - 8} ${ly}h12M${lx - 2} ${ly - 6}v12`} stroke="#a9a9a9" />
          <text x={lx - 1} y={ly}>S{i + 1}</text>
        </g>
      ))}
    </svg>
  );
}

function Icon({ name }) {
  return <Svg viewBox="0 0 28 28" aria-hidden="true">{ICONS[name]}</Svg>;
}

function Toolbar({ groups, height }) {
  return (
    <ToolbarRow $height={height}>
      {groups.map((group) => (
        <ToolGroup key={group.items[0]} $pad={group.pad} $detached={group.detached}>
          <Grip><i /><i /><i /><i /></Grip>
          {group.items.map((name) => (
            <ToolButton key={name} type="button" aria-label={name} $on={ACTIVE.includes(name)}>
              <Icon name={name} />
            </ToolButton>
          ))}
        </ToolGroup>
      ))}
    </ToolbarRow>
  );
}

function IconStrip({ items, top, breakAt }) {
  return (
    <Strip $top={top}>
      {items.map((name) => (
        <StripButton key={name} type="button" aria-label={name} $break={name === breakAt}>
          <Icon name={name} />
        </StripButton>
      ))}
    </Strip>
  );
}

export default function App() {
  return (
    <Window>
      <GlobalStyle />
      <TitleBar>
        <Title>
          <Svg viewBox="0 0 28 28" aria-hidden="true">
            <path d="M1 20L20 1l7 5L9 26l-8 1z" fill="#4a4a4a" />
            <path d="M3 21c6 0 8-5 12-7s7-3 9-7M7 25c4-1 6-4 9-6" stroke="#e6e6e6" strokeWidth="1.800" fill="none" />
            <path d="M8 14l6 1M14 7l7 1" stroke="#aaa" />
          </Svg>
          SheetCam TNG - TRACTOR WHEEL MONOGRAM 2004 DXF
        </Title>
        <WindowButtons>
          <WindowButton type="button" aria-label="Minimize">
            <Svg viewBox="0 0 18 18" $w={18} $h={18}><path d="M0 9h18" stroke="#111" strokeWidth="1.600" /></Svg>
          </WindowButton>
          <WindowButton type="button" aria-label="Restore">
            <Svg viewBox="0 0 18 18" $w={18} $h={18}>
              <rect x="1" y="4.500" width="12.500" height="12.500" rx="2" fill="none" stroke="#111" strokeWidth="1.700" />
              <path d="M5 1h8a4 4 0 0 1 4 4v8" fill="none" stroke="#111" strokeWidth="1.600" />
            </Svg>
          </WindowButton>
          <WindowButton type="button" aria-label="Close">
            <Svg viewBox="0 0 18 18" $w={18} $h={18}><path d="M1 1l16 16M17 1L1 17" stroke="#111" strokeWidth="1.600" /></Svg>
          </WindowButton>
        </WindowButtons>
      </TitleBar>

      <MenuBar>
        {MENUS.map((menu) => <MenuItem key={menu} type="button">{menu}</MenuItem>)}
      </MenuBar>

      <ToolbarArea>
        <Toolbar groups={TOP_GROUPS} height={45} />
        <Toolbar groups={BOTTOM_GROUPS} height={46} />
      </ToolbarArea>

      <Workspace>
        <Sidebar>
          <Panel>
            <PanelTitle>Parts</PanelTitle>
            <PanelBody>
              <Tree>
                <CheckRow $tree>
                  <Dots />
                  <CheckBox type="checkbox" defaultChecked />
                  <RowText>TRACTOR WHEEL</RowText>
                </CheckRow>
                <ScrollX />
              </Tree>
            </PanelBody>
          </Panel>

          <Panel>
            <PanelTitle>Tools</PanelTitle>
            <PanelBody>
              <IconStrip items={["torch", "gcode", "table", "notes"]} top={7} breakAt="table" />
              <ToolList>
                {TOOLS.map((tool) => <li key={tool}>{tool}</li>)}
              </ToolList>
              <ScrollY />
            </PanelBody>
          </Panel>

          <Panel>
            <PanelTitle>Operations</PanelTitle>
            <PanelBody>
              <IconStrip items={["jet", "drill", "gcode", "gvar", "drillMove", "table"]} top={21} breakAt="table" />
              <Tree>
                <CheckRow>
                  <CheckBox type="checkbox" defaultChecked />
                  <RowText $selected>Outside Offse...</RowText>
                </CheckRow>
              </Tree>
            </PanelBody>
          </Panel>
        </Sidebar>

        <Canvas>
          <Drawing />
        </Canvas>
      </Workspace>

      <StatusBar>
        <StatusCell $pad={4}>Cut distance 401.598 in , 38 Pierces, Time 334.69 s</StatusCell>
        <StatusCell $pad={7}>1.5531 in, 16.1818 in</StatusCell>
        <StatusCell>
          <Field>Pos X<input type="text" defaultValue="3.937 in" /></Field>
          <Field>Y<input type="text" defaultValue="0.3935 in" /></Field>
          <Field>A<input type="text" defaultValue="0 degrees" /></Field>
          <Field $gap={2}>Mirror X<CheckBox type="checkbox" /></Field>
          <Field $gap={2}>Y<CheckBox type="checkbox" /></Field>
        </StatusCell>
      </StatusBar>
    </Window>
  );
}
